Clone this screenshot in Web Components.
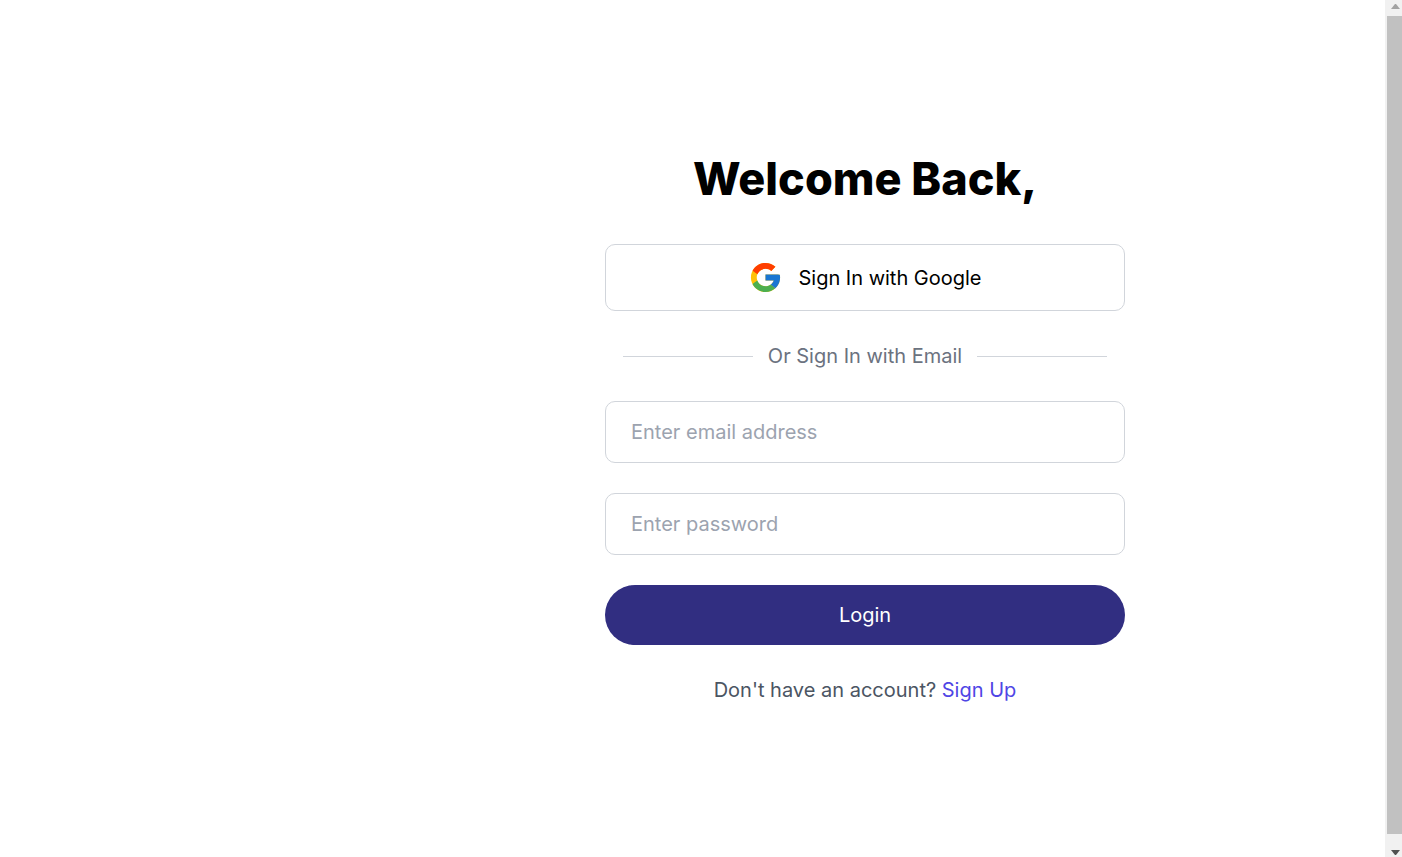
<!DOCTYPE html>
<html lang="en">
<head>
<meta charset="utf-8">
<meta name="viewport" content="width=device-width, initial-scale=1">
<title>Sign In</title>
<style>
  body { margin: 0; background: #fff; color: #000; font: 400 20px/30px Inter, "Liberation Sans", sans-serif; }
</style>
</head>
<body>
<app-shell>
  <sign-in-form>
    <h1 slot="title">Welcome Back,</h1>
    <google-button>Sign In with Google</google-button>
    <text-divider>Or Sign In with Email</text-divider>
    <text-field type="email" label="Enter email address"></text-field>
    <text-field type="password" label="Enter password"></text-field>
    <primary-button>Login</primary-button>
    <sign-up-note href="#signup" action="Sign Up">Don't have an account?</sign-up-note>
  </sign-in-form>
  <scroll-track slot="scroll"></scroll-track>
</app-shell>
<script>
  class Base extends HTMLElement {
    constructor() {
      super();
      this.attachShadow({ mode: 'open' });
    }
    connectedCallback() {
      this.shadowRoot.innerHTML = '<style>*{box-sizing:border-box}:host{box-sizing:border-box}' +
        this.styles() + '</style>' + this.markup();
    }
  }

  customElements.define('app-shell', class extends Base {
    styles() { return `
      :host { display: flex; min-height: 100vh; }
      main { flex: 1; display: grid; grid-template-columns: 345px 1fr; align-items: center; padding-top: 2px; }
      .panel { grid-column: 2; display: flex; justify-content: center; }`; }
    markup() { return '<main><div class="panel"><slot></slot></div></main><slot name="scroll"></slot>'; }
  });

  customElements.define('sign-in-form', class extends Base {
    styles() { return `
      :host { display: block; width: 50%; }
      form { display: flex; flex-direction: column; gap: 30px; }
      ::slotted(h1) { margin: 0 0 10px; font-size: 45px; line-height: 50px; font-weight: 800; text-align: center; }`; }
    markup() { return '<form><slot name="title"></slot><slot></slot></form>'; }
  });

  customElements.define('google-button', class extends Base {
    styles() { return `
      :host { display: block; }
      button { display: flex; align-items: center; justify-content: center; gap: 15px; width: 100%; padding: 15px;
        border: 1px solid #d1d5db; border-radius: 10px; background: #fff; color: inherit; font: inherit; cursor: pointer; }
      svg { width: 35px; height: 35px; }`; }
    markup() { return `<button type="button">
      <svg viewBox="0 0 48 48" aria-hidden="true">
        <path fill="#FFC107" d="M43.611 20.083H42V20H24v8h11.303c-1.649 4.657-6.08 8-11.303 8-6.627 0-12-5.373-12-12s5.373-12 12-12c3.059 0 5.842 1.154 7.961 3.039l5.657-5.657C34.046 6.053 29.268 4 24 4 12.955 4 4 12.955 4 24s8.955 20 20 20 20-8.955 20-20c0-1.341-.138-2.65-.389-3.917z"/>
        <path fill="#FF3D00" d="M6.306 14.691l6.571 4.819C14.655 15.108 18.961 12 24 12c3.059 0 5.842 1.154 7.961 3.039l5.657-5.657C34.046 6.053 29.268 4 24 4 16.318 4 9.656 8.337 6.306 14.691z"/>
        <path fill="#4CAF50" d="M24 44c5.166 0 9.86-1.977 13.409-5.192l-6.19-5.238C29.211 35.091 26.715 36 24 36c-5.202 0-9.619-3.317-11.283-7.946l-6.522 5.025C9.505 39.556 16.227 44 24 44z"/>
        <path fill="#1976D2" d="M43.611 20.083H42V20H24v8h11.303c-.792 2.237-2.231 4.166-4.087 5.571l.003-.002 6.19 5.238C36.971 39.205 44 34 44 24c0-1.341-.138-2.65-.389-3.917z"/>
      </svg><span><slot></slot></span></button>`; }
  });

  customElements.define('text-divider', class extends Base {
    styles() { return `
      :host { display: flex; align-items: center; justify-content: center; gap: 15px; color: #6b7280; }
      i { width: 25%; height: 1px; background: #d1d5db; }`; }
    markup() { return '<i></i><span><slot></slot></span><i></i>'; }
  });

  customElements.define('text-field', class extends Base {
    styles() { return `
      :host { display: block; }
      input { display: block; width: 100%; margin: 0; padding: 15px 25px; height: 62px;
        border: 1px solid #d1d5db; border-radius: 10px; background: #fff; color: inherit; font: inherit; }
      input::placeholder { color: #9ca3af; opacity: 1; }`; }
    markup() {
      const label = this.getAttribute('label');
      return `<input type="${this.getAttribute('type')}" placeholder="${label}" aria-label="${label}">`;
    }
  });

  customElements.define('primary-button', class extends Base {
    styles() { return `
      :host { display: block; }
      button { display: block; width: 100%; padding: 15px; border: 0; border-radius: 30px;
        background: #312e81; color: #fff; font: inherit; cursor: pointer; }`; }
    markup() { return '<button type="submit"><slot></slot></button>'; }
  });

  customElements.define('sign-up-note', class extends Base {
    styles() { return `
      :host { display: block; text-align: center; color: #4b5563; }
      a { color: #4f46e5; text-decoration: none; }`; }
    markup() { return `<slot></slot> <a href="${this.getAttribute('href')}">${this.getAttribute('action')}</a>`; }
  });

  customElements.define('scroll-track', class extends Base {
    styles() { return `
      :host { display: flex; flex-direction: column; width: 17px; background: #f1f1f1; }
      svg { display: block; width: 17px; height: 16px; }
      .thumb { flex: 1; margin: 0 0 7px 2px; background: #c1c1c1; }`; }
    markup() { return `
      <svg viewBox="0 0 17 16" aria-hidden="true"><path fill="#a3a3a3" d="M6 9h9l-4-5h-1z"/></svg>
      <div class="thumb"></div>
      <svg viewBox="0 0 17 16" aria-hidden="true"><path fill="#505050" d="M6 9h9l-4 5h-1z"/></svg>`; }
  });
</script>
</body>
</html>
